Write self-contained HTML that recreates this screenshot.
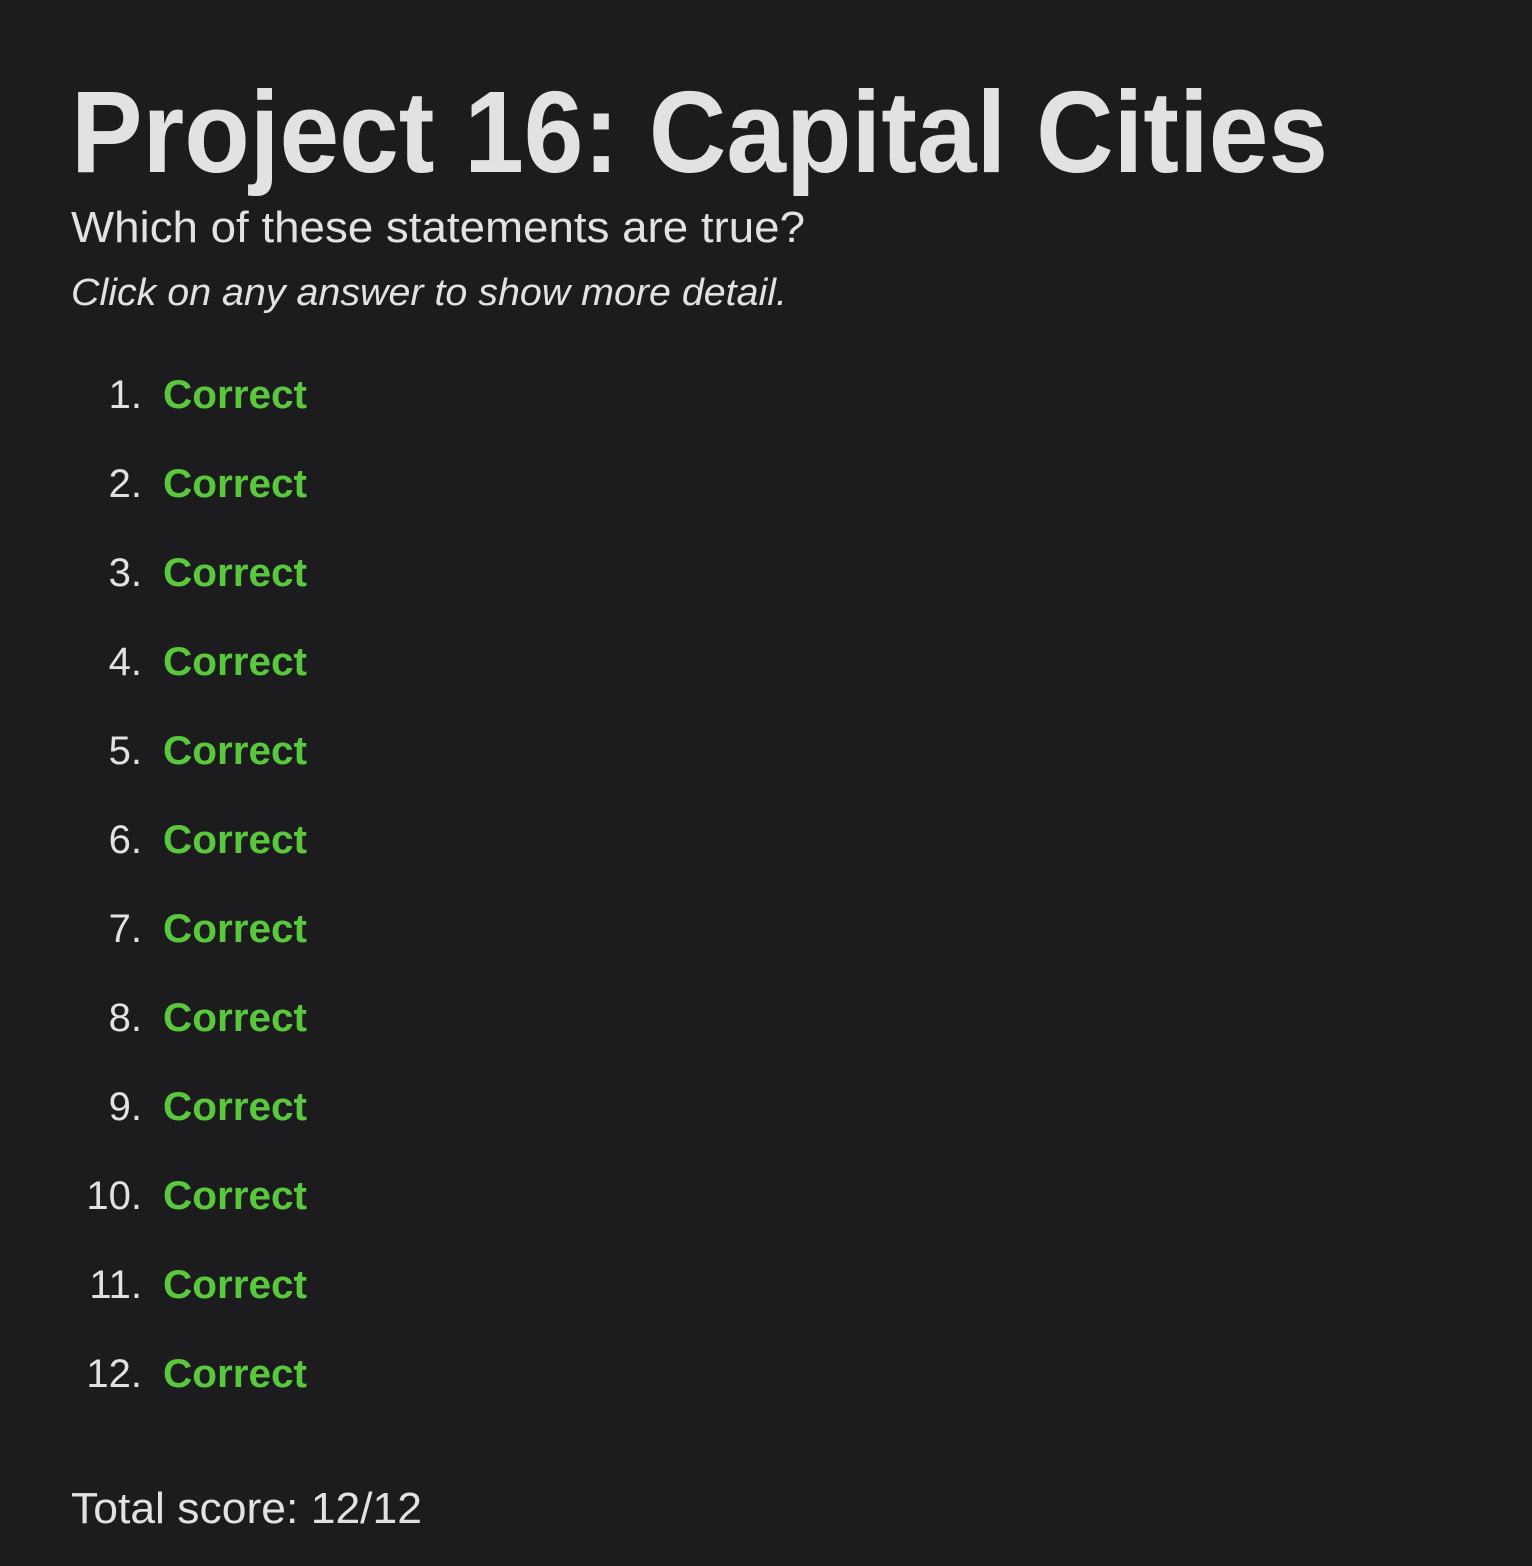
<!DOCTYPE html>
<html><head><meta charset="utf-8"><style>
html,body{margin:0;padding:0;background:#1c1c1e;width:1532px;height:1566px;overflow:hidden}
svg{display:block}
</style></head><body>
<svg width="1532" height="1566" xmlns="http://www.w3.org/2000/svg" font-family="Liberation Sans, sans-serif">
<text x="71" y="172" font-size="116" font-weight="bold" fill="#e2e2e4" textLength="1257" lengthAdjust="spacingAndGlyphs">Project 16: Capital Cities</text>
<text x="71" y="242" font-size="44" fill="#e2e2e4" textLength="734" lengthAdjust="spacingAndGlyphs">Which of these statements are true?</text>
<text x="71" y="305" font-size="38" font-style="italic" fill="#e2e2e4" textLength="716" lengthAdjust="spacingAndGlyphs">Click on any answer to show more detail.</text>
<g font-size="40">
<g fill="#e2e2e4" text-anchor="end">
<text x="142" y="408">1.</text><text x="142" y="497">2.</text><text x="142" y="586">3.</text><text x="142" y="675">4.</text><text x="142" y="764">5.</text><text x="142" y="853">6.</text><text x="142" y="942">7.</text><text x="142" y="1031">8.</text><text x="142" y="1120">9.</text><text x="142" y="1209">10.</text><text x="142" y="1298">11.</text><text x="142" y="1387">12.</text>
</g>
<g fill="#5ac83c" font-weight="bold">
<text x="163" y="408" textLength="144" lengthAdjust="spacingAndGlyphs">Correct</text>
<text x="163" y="497" textLength="144" lengthAdjust="spacingAndGlyphs">Correct</text>
<text x="163" y="586" textLength="144" lengthAdjust="spacingAndGlyphs">Correct</text>
<text x="163" y="675" textLength="144" lengthAdjust="spacingAndGlyphs">Correct</text>
<text x="163" y="764" textLength="144" lengthAdjust="spacingAndGlyphs">Correct</text>
<text x="163" y="853" textLength="144" lengthAdjust="spacingAndGlyphs">Correct</text>
<text x="163" y="942" textLength="144" lengthAdjust="spacingAndGlyphs">Correct</text>
<text x="163" y="1031" textLength="144" lengthAdjust="spacingAndGlyphs">Correct</text>
<text x="163" y="1120" textLength="144" lengthAdjust="spacingAndGlyphs">Correct</text>
<text x="163" y="1209" textLength="144" lengthAdjust="spacingAndGlyphs">Correct</text>
<text x="163" y="1298" textLength="144" lengthAdjust="spacingAndGlyphs">Correct</text>
<text x="163" y="1387" textLength="144" lengthAdjust="spacingAndGlyphs">Correct</text>
</g>
</g>
<text x="71" y="1523" font-size="44" fill="#e2e2e4" textLength="351" lengthAdjust="spacingAndGlyphs">Total score: 12/12</text>
</svg>
</body></html>
